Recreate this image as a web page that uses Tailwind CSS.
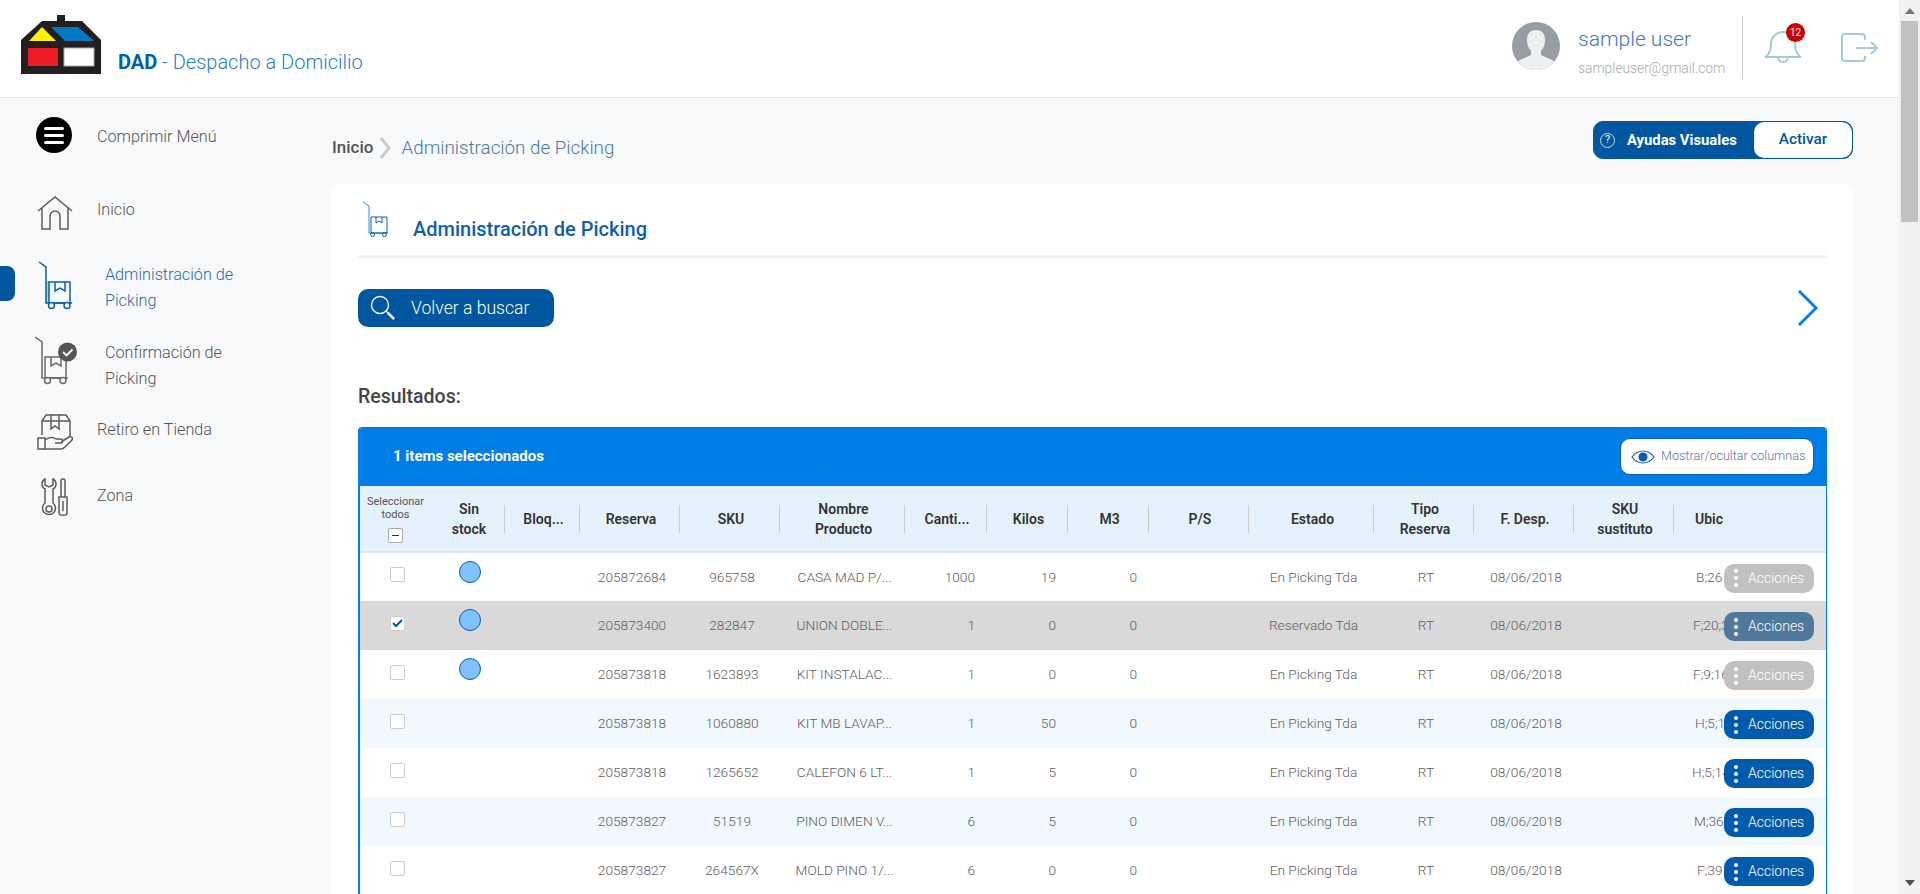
<!DOCTYPE html>
<html lang="es">
<head>
    <meta charset="UTF-8">
    <title>DAD - Despacho a Domicilio</title>
    <script src="https://cdn.jsdelivr.net/npm/@tailwindcss/browser@4"></script>
</head>
<body class="font-[Roboto,sans-serif] font-light bg-[#f8f9fb] h-[894px] overflow-hidden flex text-[#606060]">
<div class="flex-1 min-w-0 flex flex-col h-[894px] overflow-hidden">

    <!-- header -->
    <header class="flex-none h-[98px] bg-white border-b border-[#e4e5e7] flex items-start">
        <svg class="mt-[15px] ml-[21px] flex-none" width="80" height="59" viewBox="0 0 80 59">
            <rect x="36" y="0" width="8" height="8" fill="#231f20"/>
            <polygon points="0,25 21,6 61,6 80,25 80,59 0,59" fill="#231f20"/>
            <polygon points="8,26 21,12 35,26" fill="#fff200"/>
            <polygon points="30,12 57,12 73,26 44,26" fill="#0079c2"/>
            <rect x="7" y="33" width="30" height="18" fill="#ed1c24"/>
            <rect x="43" y="33" width="30" height="18" fill="#fff" stroke="#aaa" stroke-width="1"/>
        </svg>
        <div class="ml-[17px] mt-[50px] text-[20px] leading-6 text-[#2a7cc7]"><span class="font-bold text-[#0060af]">DAD</span> - Despacho a Domicilio</div>
        <div class="ml-auto flex items-start">
            <svg class="mt-[22px] flex-none" width="48" height="48" viewBox="0 0 48 48">
                <defs><clipPath id="av"><circle cx="24" cy="24" r="24"/></clipPath></defs>
                <g clip-path="url(#av)">
                    <rect width="48" height="48" fill="#979da3"/>
                    <path d="M24 8c-6 0-9 4-9 10 0 4 1 8 4 11v4l-13 6 4 9h28l4-9-13-6v-4c3-3 4-7 4-11 0-6-3-10-9-10z" fill="#ecf0f1"/>
                </g>
            </svg>
            <div class="ml-[18px] w-[165px] border-r border-[#ccc] mt-[16px] h-[63px]">
                <div class="mt-[11px] text-[21px] leading-6 text-[#3b78c9]">sample user</div>
                <div class="mt-[7px] text-[13.8px] leading-5 text-[#aaa]">sampleuser@gmail.com</div>
            </div>
            <div class="relative ml-[21px] mt-[28px] w-[38px] h-[38px]">
                <svg width="38" height="38" viewBox="0 0 38 38" fill="none" stroke="#a9c8d6" stroke-width="2">
                    <path d="M1.500 29c4-3 5.500-7 5.500-13a12 12 0 0 1 24 0c0 6 1.500 10 5.500 13z" stroke-linejoin="round"/>
                    <path d="M14 29a5 5 0 0 0 10 0"/>
                </svg>
                <span class="absolute left-[22px] -top-[5px] w-[19px] h-[19px] rounded-full bg-[#c80000] text-white text-[10px] font-normal flex items-center justify-center">12</span>
            </div>
            <svg class="ml-[39px] mt-[33px] mr-[20px] flex-none" width="38" height="30" viewBox="0 0 38 30" fill="none" stroke="#a9c8d6" stroke-width="2">
                <path d="M24 7V4a3 3 0 0 0-3-3H4a3 3 0 0 0-3 3v21a3 3 0 0 0 3 3h17a3 3 0 0 0 3-3v-2"/>
                <path d="M15 15h21M30 9l6 6-6 6"/>
            </svg>
        </div>
    </header>

    <div class="flex-1 flex min-h-0">
        <!-- sidebar -->
        <aside class="flex-none w-[331px] pt-[19px] text-[16.2px] text-[#555]">
            <div class="flex items-center h-[36px] pl-[36px]">
                <span class="w-[36px] h-[36px] rounded-full bg-black flex flex-col items-center justify-center gap-[4px]">
                    <i class="block w-[20px] h-[3px] bg-white rounded-sm"></i>
                    <i class="block w-[20px] h-[3px] bg-white rounded-sm"></i>
                    <i class="block w-[20px] h-[3px] bg-white rounded-sm"></i>
                </span>
                <span class="ml-[25px] mt-[5px]">Comprimir Menú</span>
            </div>
            <div class="flex items-center h-[36px] mt-[39px] pl-[37px]">
                <svg class="mt-[6px]" width="36" height="34" viewBox="0 0 36 34" fill="none" stroke="#5c5c5c" stroke-width="1.500">
                    <path d="M1 15 18 1l17 14M5 12v21h8V20a5 5 0 0 1 10 0v13h8V12"/>
                </svg>
                <span class="ml-[24px]">Inicio</span>
            </div>
            <div class="flex items-center h-[52px] mt-[33px] text-[#2a69ae] leading-[26px]">
                <span class="flex-none w-[15px] h-[35px] -mt-[7px] bg-[#00569f] rounded-r-lg"></span>
                <svg class="flex-none ml-[23px] -mt-[4px]" width="34" height="48" viewBox="0 0 34 48" fill="none" stroke="#0a5ea8" stroke-width="1.500">
                    <rect x="8" y="20" width="3" height="22" fill="#a9cdea" stroke="none"/>
                    <path d="M1 1l7 5v36h26"/>
                    <path d="M11 21h21v21H11z"/>
                    <path d="M17 21v9l5-3 5 3v-9"/>
                    <circle cx="13.500" cy="44.500" r="3" fill="#f8f9fb"/>
                    <circle cx="29" cy="44.500" r="3" fill="#f8f9fb"/>
                </svg>
                <span class="ml-[33px] mt-[2px] w-[150px]">Administración de Picking</span>
            </div>
            <div class="flex items-center h-[52px] mt-[26px] pl-[34px] leading-[26px]">
                <svg class="flex-none -mt-[9px]" width="43" height="49" viewBox="0 0 43 49" fill="none" stroke="#6a6a6a" stroke-width="1.500">
                    <path d="M1 1l7 5v36h26"/>
                    <path d="M11 21h21v21H11z"/>
                    <path d="M17 21v9l5-3 5 3v-9"/>
                    <circle cx="13.500" cy="44.500" r="3" fill="#f8f9fb"/>
                    <circle cx="29" cy="44.500" r="3" fill="#f8f9fb"/>
                    <circle cx="33.500" cy="16" r="9.500" fill="#555" stroke="none"/>
                    <path d="M29 16l3.500 3.500 6-6" stroke="#fff" stroke-width="1.800"/>
                </svg>
                <span class="ml-[28px] mt-[2px] w-[150px]">Confirmación de Picking</span>
            </div>
            <div class="flex items-center h-[36px] mt-[21px] pl-[37px]">
                <svg class="mt-[4px]" width="36" height="36" viewBox="0 0 36 36" fill="none" stroke="#5c5c5c" stroke-width="1.500">
                    <path d="M5 21V7l4-6h20l4 6v16M5 7h28M14 1v14l4-3 4 3V1"/>
                    <path d="M1 24h7v11H1zM8 26c4-3 8-3 11-1h5c2 0 2 4 0 4h-6M24 28l8-5c3-1 4 1 3 3l-7 7c-1 1-2 2-4 2H8"/>
                </svg>
                <span class="ml-[24px]">Retiro en Tienda</span>
            </div>
            <div class="flex items-center h-[36px] mt-[28px] pl-[40px]">
                <svg class="mt-[6px]" width="29" height="38" viewBox="0 0 29 38" fill="none" stroke="#5c5c5c" stroke-width="1.500">
                    <path d="M5 1C1 3 1 9 5 11v14a6.500 6.500 0 1 0 8 0V11c4-2 4-8 0-10v6l-4 2-4-2z"/>
                    <circle cx="9" cy="31" r="3"/>
                    <path d="M23 1c-1 0-2 1-2 2v16h4V3c0-1-1-2-2-2zM19 19h8v16c0 3-8 3-8 0zM23 23v10"/>
                </svg>
                <span class="ml-[28px] mt-[5px]">Zona</span>
            </div>
        </aside>

        <!-- main -->
        <main class="flex-1 min-w-0 pr-[46px] pt-[23px]">
            <div class="flex items-start h-[38px]">
                <div class="flex items-center mt-[13px]">
                    <span class="ml-px text-[17px] font-medium text-[#555]">Inicio</span>
                    <svg class="ml-[6px]" width="12" height="22" viewBox="0 0 12 22" fill="none" stroke="#ccc" stroke-width="3"><path d="M2 1l8 10-8 10"/></svg>
                    <span class="ml-[10px] text-[18.8px] text-[#4a78a8]">Administración de Picking</span>
                </div>
                <div class="ml-auto flex h-[38px] w-[260px] rounded-[10px] bg-[#00569f] border border-[#00569f] overflow-hidden">
                    <span class="ml-[6px] self-center w-[15px] h-[15px] rounded-full border border-[#cfe0ee] text-white text-[11px] font-normal flex items-center justify-center">?</span>
                    <span class="ml-[12px] mt-px self-center text-[14.8px] font-bold text-white">Ayudas Visuales</span>
                    <span class="ml-auto w-[98px] bg-white rounded-[10px] flex items-center justify-center text-[15.4px] font-medium text-[#00569f]">Activar</span>
                </div>
            </div>

            <section class="mt-[25px] bg-white rounded-t-xl pl-[27px] pr-[26px] h-[800px]">
                <div class="flex items-end h-[74px] border-b-[3px] border-[#f3f3f3]">
                    <svg class="mb-[18px] ml-[4px] flex-none" width="27" height="36" viewBox="0 0 27 36" fill="none" stroke="#0a5ea8" stroke-width="1">
                        <path d="M1 1l6 4v27h19" stroke="#2f8fe0"/>
                        <path d="M9 16h16v16H9z"/>
                        <path d="M14 16v6l3-2 3 2v-6"/>
                        <circle cx="10.500" cy="33.500" r="2"/>
                        <circle cx="22.500" cy="33.500" r="2"/>
                    </svg>
                    <span class="ml-[24px] mb-[11px] text-[20px] font-medium text-[#0d5fac]">Administración de Picking</span>
                </div>
                <div class="flex items-center justify-between mt-[31px] h-[38px]">
                    <div class="flex items-center w-[196px] h-[38px] rounded-[10px] bg-[#00569f]">
                        <svg class="ml-[12px]" width="26" height="26" viewBox="0 0 26 26" fill="none" stroke="#fff" stroke-width="1.300">
                            <circle cx="10" cy="10" r="8.500"/>
                            <path d="M16 16l2 2"/>
                            <path d="M18 18l6 6" stroke-width="2.500"/>
                        </svg>
                        <span class="ml-[15px] text-[17.600px] text-white">Volver a buscar</span>
                    </div>
                    <svg class="mr-[8px]" width="22" height="36" viewBox="0 0 22 36" fill="none" stroke="#0d7fe0" stroke-width="3"><path d="M2 1l17 17L2 35"/></svg>
                </div>
                <h2 class="mt-[58px] text-[19.5px] leading-6 font-medium text-[#444]">Resultados:</h2>

                <div class="mt-[18px] border-l-2 border-r border-[#017de8] rounded-t-[4px] overflow-hidden">
                    <div class="flex items-center h-[59px] bg-[#017de8]">
                        <span class="ml-[33px] text-[15px] font-bold text-white">1 items seleccionados</span>
                        <div class="ml-auto mr-[12px] flex items-center h-[37px] w-[194px] bg-white rounded-[10px] border border-[#0a5ea8]">
                            <svg class="ml-[10px] flex-none" width="24" height="18" viewBox="0 0 24 18" fill="none" stroke="#0a5ea8" stroke-width="1.200">
                                <path d="M1 9c6-8 16-8 22 0-6 8-16 8-22 0z"/>
                                <circle cx="12" cy="9" r="4" fill="#0a5ea8"/>
                            </svg>
                            <span class="ml-[6px] text-[12.6px] text-[#64749a] whitespace-nowrap">Mostrar/ocultar columnas</span>
                        </div>
                    </div>

                    <table class="table-fixed w-[1466px] text-[13.7px] [&_th]:font-semibold [&_th]:p-0 [&_th]:pl-[3px] [&_td]:p-0 [&_td]:pl-[4px] [&_td]:text-center">
                        <colgroup>
                            <col class="w-[71px]"><col class="w-[74px]"><col class="w-[75px]"><col class="w-[100px]"><col class="w-[100px]">
                            <col class="w-[125px]"><col class="w-[82px]"><col class="w-[81px]"><col class="w-[81px]"><col class="w-[100px]">
                            <col class="w-[125px]"><col class="w-[100px]"><col class="w-[100px]"><col class="w-[100px]"><col class="w-[152px]">
                        </colgroup>
                        <thead>
                            <tr class="h-[66px] bg-[#e5f2fe] border-b-2 border-[#e3e6e8] text-[14px] leading-5 text-[#333] [&>th>div]:h-[28px] [&>th>div]:border-r [&>th>div]:border-[#ccc] [&>th>div]:flex [&>th>div]:items-center [&>th>div]:justify-center">
                                <th class="!font-normal !pl-0"><div class="!border-0 !h-auto flex-col text-[11px] leading-[13px] text-[#555]">
                                    <span>Seleccionar<br>todos</span>
                                    <span class="mt-[7px] w-[15px] h-[15px] bg-white border border-[#aaa] rounded-[2px] flex items-center justify-center"><i class="block w-[7px] h-px bg-[#333]"></i></span>
                                </div></th>
                                <th><div>Sin<br>stock</div></th>
                                <th><div>Bloq...</div></th>
                                <th><div>Reserva</div></th>
                                <th><div>SKU</div></th>
                                <th><div>Nombre<br>Producto</div></th>
                                <th><div>Canti...</div></th>
                                <th><div>Kilos</div></th>
                                <th><div>M3</div></th>
                                <th><div>P/S</div></th>
                                <th><div>Estado</div></th>
                                <th><div>Tipo<br>Reserva</div></th>
                                <th><div>F. Desp.</div></th>
                                <th><div>SKU<br>sustituto</div></th>
                                <th class="text-left !pl-[21px]">Ubic</th>
                            </tr>
                        </thead>
                        <tbody class="[&>tr]:h-[49px]">
                            <tr>
                                <td><span class="block mx-auto mb-[5px] w-[15px] h-[15px] border border-[#ccc] rounded-[2px] bg-white"></span></td>
                                <td><span class="block mx-auto mb-[11px] w-[22px] h-[22px] rounded-full bg-[#80c1ff] border border-[#0a5ea8]"></span></td>
                                <td></td><td>205872684</td><td>965758</td><td>CASA MAD P/...</td>
                                <td class="!text-right !pr-[12px]">1000</td><td class="!text-right !pr-[12px]">19</td><td class="!text-right !pr-[12px]">0</td>
                                <td></td><td>En Picking Tda</td><td>RT</td><td>08/06/2018</td><td></td>
                                <td class="!p-0"><div class="flex items-center"><span class="w-[50px] overflow-hidden whitespace-nowrap text-left pl-[22px]">B;26</span><span class="mt-[2px] flex items-center w-[90px] h-[29px] rounded-[10px] bg-[#c1c1c1] text-white text-[14px]"><span class="ml-[10px] w-[4px] flex flex-col gap-[3px]"><i class="block w-[4px] h-[4px] rounded-full bg-white"></i><i class="block w-[4px] h-[4px] rounded-full bg-white"></i><i class="block w-[4px] h-[4px] rounded-full bg-white"></i></span><span class="ml-[10px]">Acciones</span></span></div></td>
                            </tr>
                            <tr class="bg-[#d9d9d9]">
                                <td><span class="mx-auto mb-[5px] w-[15px] h-[15px] border border-[#ccc] rounded-[2px] bg-white flex items-center justify-center"><svg width="11" height="9" viewBox="0 0 11 9" fill="none" stroke="#00569f" stroke-width="2"><path d="M1 4l3 3 6-6"/></svg></span></td>
                                <td><span class="block mx-auto mb-[11px] w-[22px] h-[22px] rounded-full bg-[#80c1ff] border border-[#0a5ea8]"></span></td>
                                <td></td><td>205873400</td><td>282847</td><td>UNION DOBLE...</td>
                                <td class="!text-right !pr-[12px]">1</td><td class="!text-right !pr-[12px]">0</td><td class="!text-right !pr-[12px]">0</td>
                                <td></td><td>Reservado Tda</td><td>RT</td><td>08/06/2018</td><td></td>
                                <td class="!p-0"><div class="flex items-center"><span class="w-[50px] overflow-hidden whitespace-nowrap text-left pl-[19px]">F;20;3</span><span class="mt-[2px] flex items-center w-[90px] h-[29px] rounded-[10px] bg-[#4f789c] text-white text-[14px]"><span class="ml-[10px] w-[4px] flex flex-col gap-[3px]"><i class="block w-[4px] h-[4px] rounded-full bg-white"></i><i class="block w-[4px] h-[4px] rounded-full bg-white"></i><i class="block w-[4px] h-[4px] rounded-full bg-white"></i></span><span class="ml-[10px]">Acciones</span></span></div></td>
                            </tr>
                            <tr>
                                <td><span class="block mx-auto mb-[5px] w-[15px] h-[15px] border border-[#ccc] rounded-[2px] bg-white"></span></td>
                                <td><span class="block mx-auto mb-[11px] w-[22px] h-[22px] rounded-full bg-[#80c1ff] border border-[#0a5ea8]"></span></td>
                                <td></td><td>205873818</td><td>1623893</td><td>KIT INSTALAC...</td>
                                <td class="!text-right !pr-[12px]">1</td><td class="!text-right !pr-[12px]">0</td><td class="!text-right !pr-[12px]">0</td>
                                <td></td><td>En Picking Tda</td><td>RT</td><td>08/06/2018</td><td></td>
                                <td class="!p-0"><div class="flex items-center"><span class="w-[50px] overflow-hidden whitespace-nowrap text-left pl-[19px]">F;9;16</span><span class="mt-[2px] flex items-center w-[90px] h-[29px] rounded-[10px] bg-[#c1c1c1] text-white text-[14px]"><span class="ml-[10px] w-[4px] flex flex-col gap-[3px]"><i class="block w-[4px] h-[4px] rounded-full bg-white"></i><i class="block w-[4px] h-[4px] rounded-full bg-white"></i><i class="block w-[4px] h-[4px] rounded-full bg-white"></i></span><span class="ml-[10px]">Acciones</span></span></div></td>
                            </tr>
                            <tr class="bg-[#f1f8fe]">
                                <td><span class="block mx-auto mb-[5px] w-[15px] h-[15px] border border-[#ccc] rounded-[2px] bg-white"></span></td>
                                <td></td>
                                <td></td><td>205873818</td><td>1060880</td><td>KIT MB LAVAP...</td>
                                <td class="!text-right !pr-[12px]">1</td><td class="!text-right !pr-[12px]">50</td><td class="!text-right !pr-[12px]">0</td>
                                <td></td><td>En Picking Tda</td><td>RT</td><td>08/06/2018</td><td></td>
                                <td class="!p-0"><div class="flex items-center"><span class="w-[50px] overflow-hidden whitespace-nowrap text-left pl-[21px]">H;5;11</span><span class="mt-[2px] flex items-center w-[90px] h-[29px] rounded-[10px] bg-[#005bac] text-white text-[14px]"><span class="ml-[10px] w-[4px] flex flex-col gap-[3px]"><i class="block w-[4px] h-[4px] rounded-full bg-white"></i><i class="block w-[4px] h-[4px] rounded-full bg-white"></i><i class="block w-[4px] h-[4px] rounded-full bg-white"></i></span><span class="ml-[10px]">Acciones</span></span></div></td>
                            </tr>
                            <tr>
                                <td><span class="block mx-auto mb-[5px] w-[15px] h-[15px] border border-[#ccc] rounded-[2px] bg-white"></span></td>
                                <td></td>
                                <td></td><td>205873818</td><td>1265652</td><td>CALEFON 6 LT...</td>
                                <td class="!text-right !pr-[12px]">1</td><td class="!text-right !pr-[12px]">5</td><td class="!text-right !pr-[12px]">0</td>
                                <td></td><td>En Picking Tda</td><td>RT</td><td>08/06/2018</td><td></td>
                                <td class="!p-0"><div class="flex items-center"><span class="w-[50px] overflow-hidden whitespace-nowrap text-left pl-[18px]">H;5;14</span><span class="mt-[2px] flex items-center w-[90px] h-[29px] rounded-[10px] bg-[#005bac] text-white text-[14px]"><span class="ml-[10px] w-[4px] flex flex-col gap-[3px]"><i class="block w-[4px] h-[4px] rounded-full bg-white"></i><i class="block w-[4px] h-[4px] rounded-full bg-white"></i><i class="block w-[4px] h-[4px] rounded-full bg-white"></i></span><span class="ml-[10px]">Acciones</span></span></div></td>
                            </tr>
                            <tr class="bg-[#f1f8fe]">
                                <td><span class="block mx-auto mb-[5px] w-[15px] h-[15px] border border-[#ccc] rounded-[2px] bg-white"></span></td>
                                <td></td>
                                <td></td><td>205873827</td><td>51519</td><td>PINO DIMEN V...</td>
                                <td class="!text-right !pr-[12px]">6</td><td class="!text-right !pr-[12px]">5</td><td class="!text-right !pr-[12px]">0</td>
                                <td></td><td>En Picking Tda</td><td>RT</td><td>08/06/2018</td><td></td>
                                <td class="!p-0"><div class="flex items-center"><span class="w-[50px] overflow-hidden whitespace-nowrap text-left pl-[20px]">M;36</span><span class="mt-[2px] flex items-center w-[90px] h-[29px] rounded-[10px] bg-[#005bac] text-white text-[14px]"><span class="ml-[10px] w-[4px] flex flex-col gap-[3px]"><i class="block w-[4px] h-[4px] rounded-full bg-white"></i><i class="block w-[4px] h-[4px] rounded-full bg-white"></i><i class="block w-[4px] h-[4px] rounded-full bg-white"></i></span><span class="ml-[10px]">Acciones</span></span></div></td>
                            </tr>
                            <tr>
                                <td><span class="block mx-auto mb-[5px] w-[15px] h-[15px] border border-[#ccc] rounded-[2px] bg-white"></span></td>
                                <td></td>
                                <td></td><td>205873827</td><td>264567X</td><td>MOLD PINO 1/...</td>
                                <td class="!text-right !pr-[12px]">6</td><td class="!text-right !pr-[12px]">0</td><td class="!text-right !pr-[12px]">0</td>
                                <td></td><td>En Picking Tda</td><td>RT</td><td>08/06/2018</td><td></td>
                                <td class="!p-0"><div class="flex items-center"><span class="w-[50px] overflow-hidden whitespace-nowrap text-left pl-[23px]">F;39</span><span class="mt-[2px] flex items-center w-[90px] h-[29px] rounded-[10px] bg-[#005bac] text-white text-[14px]"><span class="ml-[10px] w-[4px] flex flex-col gap-[3px]"><i class="block w-[4px] h-[4px] rounded-full bg-white"></i><i class="block w-[4px] h-[4px] rounded-full bg-white"></i><i class="block w-[4px] h-[4px] rounded-full bg-white"></i></span><span class="ml-[10px]">Acciones</span></span></div></td>
                            </tr>
                        </tbody>
                    </table>
                </div>
            </section>
        </main>
    </div>
</div>

<!-- scrollbar -->
<div class="flex-none w-[21px] h-[894px] bg-[#f1f1f1] flex flex-col items-center">
    <svg class="mt-[8px]" width="10" height="6" viewBox="0 0 10 6"><path d="M5 0l5 6H0z" fill="#777"/></svg>
    <div class="mt-[7px] w-[17px] h-[201px] bg-[#c1c1c1]"></div>
    <svg class="mt-auto mb-[8px]" width="10" height="6" viewBox="0 0 10 6"><path d="M0 0h10L5 6z" fill="#505050"/></svg>
</div>
</body>
</html>
